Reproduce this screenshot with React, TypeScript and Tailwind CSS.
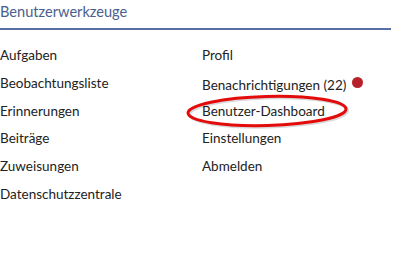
import React from "react";

const left = ["Aufgaben", "Beobachtungsliste", "Erinnerungen", "Beiträge", "Zuweisungen", "Datenschutzzentrale"];

export default function App() {
  return (
    <div className="w-[420px] h-[273px] bg-white font-['Lato',sans-serif] text-[13.5px] text-[#222]">
      <div className="w-[391px]">
        <div className="h-[28px] pt-[2px] text-[14.6px] text-[#4a5e8e] leading-[20px]">Benutzerwerkzeuge</div>
        <div className="h-[2px] bg-[#5a6ea6]" />
      </div>
      <div className="flex pt-[13px]">
        <ul className="w-[202px] flex flex-col">
          {left.map((t) => (
            <li key={t} className="h-[27.8px] leading-[24px]">{t}</li>
          ))}
        </ul>
        <ul className="flex flex-col">
          <li className="h-[27.8px] leading-[24px]">Profil</li>
          <li className="h-[27.8px] leading-[24px] flex items-center gap-[6px]">
            <span>Benachrichtigungen (22)</span>
            <span className="w-[11px] h-[11px] rounded-full bg-[#b8202a] mt-[-4px]" />
          </li>
          <li className="h-[27.8px] leading-[24px] relative">
            Benutzer-Dashboard
            <svg className="absolute left-[-16px] top-[-6px] overflow-visible" width="162" height="36" viewBox="0 0 162 36">
              <ellipse cx="81" cy="18" rx="79" ry="14.5" fill="none" stroke="#000" strokeOpacity="0.15" strokeWidth="3" transform="translate(1.5 1.5) rotate(-1.5 81 18)" />
              <ellipse cx="81" cy="18" rx="79" ry="14.5" fill="none" stroke="#e40b0b" strokeWidth="3" transform="rotate(-1.5 81 18)" />
            </svg>
          </li>
          <li className="h-[27.8px] leading-[24px]">Einstellungen</li>
          <li className="h-[27.8px] leading-[24px]">Abmelden</li>
        </ul>
      </div>
    </div>
  );
}
